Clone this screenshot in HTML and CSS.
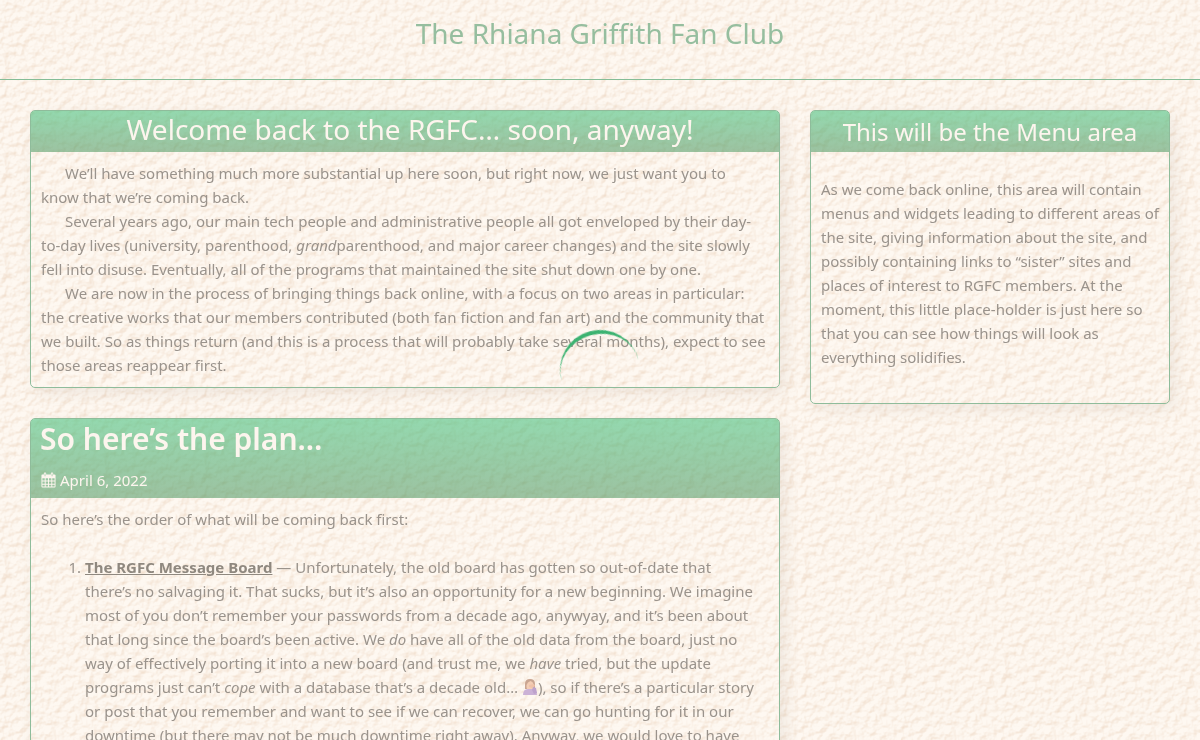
FILE: index.html
```html
<!DOCTYPE html>
<html lang="en">
<head>
    <meta charset="UTF-8">
    <meta name="viewport" content="width=device-width, initial-scale=1.0">
    <title>The Rhiana Griffith Fan Club</title>
    <link rel="stylesheet" href="styles.css">
</head>
<body class="loading">

    <!-- Stucco background -->
    <svg class="texture" aria-hidden="true">
        <filter id="stucco" x="0" y="0" width="100%" height="100%" color-interpolation-filters="sRGB">
            <feTurbulence type="fractalNoise" baseFrequency="0.13" numOctaves="3" seed="8" stitchTiles="stitch" x="0" y="0" width="100" height="100" result="noise"/>
            <feTile in="noise" result="tiled"/>
            <feDiffuseLighting in="tiled" surfaceScale="3" diffuseConstant="1.1" lighting-color="#fff" result="light">
                <feDistantLight azimuth="235" elevation="55"/>
            </feDiffuseLighting>
            <feColorMatrix type="matrix" values="0.06 0 0 0 0.935  0.12 0 0 0 0.852  0.17 0 0 0 0.775  0 0 0 0 1"/>
        </filter>
        <rect width="100%" height="100%" filter="url(#stucco)"/>
    </svg>

    <header>
        <h1>The Rhiana Griffith Fan Club</h1>
    </header>

    <div class="container">
        <main>
            <section class="card">
                <div class="card-header welcome-header">
                    <h2>Welcome back to the RGFC… soon, anyway!</h2>
                </div>
                <div class="card-body indented">
                    <p>We’ll have something much more substantial up here soon, but right now, we just want you to<br>
                    know that we’re coming back.</p>
                    <p>Several years ago, our main tech people and administrative people all got enveloped by their day-<br>
                    to-day lives (university, parenthood, <em>grand</em>parenthood, and major career changes) and the site slowly<br>
                    fell into disuse. Eventually, all of the programs that maintained the site shut down one by one.</p>
                    <p>We are now in the process of bringing things back online, with a focus on two areas in particular:<br>
                    the creative works that our members contributed (both fan fiction and fan art) and the community that<br>
                    we built. So as things return (and this is a process that will probably take several months), expect to see<br>
                    those areas reappear first.</p>
                </div>
            </section>

            <article class="card">
                <div class="card-header post-header">
                    <h2>So here’s the plan…</h2>
                    <p class="post-date">
                        <svg viewBox="0 0 16 16" aria-hidden="true">
                            <path fill="#fdf5ee" fill-rule="evenodd" d="M1.5 2H3V1Q3 0 4 0h.5q1 0 1 1v1h5V1q0-1 1-1h.5q1 0 1 1v1h1.500q1 0 1 1v12q0 1-1 1h-13q-1 0-1-1V3q0-1 1-1zM1.500 6v2.500H4V6zM5 6v2.500h2.500V6zM8.500 6v2.500H11V6zM12 6v2.500h2.500V6zM1.500 9.500V12H4V9.500zM5 9.500V12h2.500V9.500zM8.500 9.500V12H11V9.500zM12 9.500V12h2.500V9.500zM1.500 13v2H4v-2zM5 13v2h2.500v-2zM8.500 13v2H11v-2zM12 13v2h2.500v-2zM3.900 1v3h.8V1zM11.400 1v3h.8V1z"/>
                        </svg>
                        <time datetime="2022-04-06">April 6, 2022</time>
                    </p>
                </div>
                <div class="card-body">
                    <p>So here’s the order of what will be coming back first:</p>
                    <ol>
                        <li><a href="#board">The RGFC Message Board</a> — Unfortunately, the old board has gotten so out-of-date that<br>
                            there’s no salvaging it. That sucks, but it’s also an opportunity for a new beginning. We imagine<br>
                            most of you don’t remember your passwords from a decade ago, anywyay, and it’s been about<br>
                            that long since the board’s been active. We <em>do</em> have all of the old data from the board, just no<br>
                            way of effectively porting it into a new board (and trust me, we <em>have</em> tried, but the update<br>
                            programs just can’t <em>cope</em> with a database that’s a decade old…
                            <svg class="emoji" viewBox="0 0 16 16" role="img" aria-label="facepalm">
                                <path fill="#c9a591" d="M3 10V5q0-5 5-5t5 5v5z"/>
                                <path fill="#f3cdb4" d="M4.500 6q1-3 4-4 3 1 3 4v2q0 3-3.500 3T4.500 8z"/>
                                <path fill="#cbb2d6" d="M1 16q0-6 5-6h4q5 0 5 6z"/>
                                <path fill="#efc2a8" d="M7 6l5-1 1 2-3 2-3-1z"/>
                                <path fill="#bda2cc" d="M11 8l3 1 1 5-3 1-2-4z"/>
                            </svg>), so if there’s a particular story<br>
                            or post that you remember and want to see if we can recover, we can go hunting for it in our<br>
                            downtime (but there may not be much downtime right away). Anyway, we would love to have</li>
                    </ol>
                </div>
            </article>
        </main>

        <aside class="card">
            <div class="card-header menu-header">
                <h2>This will be the Menu area</h2>
            </div>
            <div class="card-body menu-body">
                <p>As we come back online, this area will contain menus and widgets leading to different areas of the site, giving information about the site, and possibly containing links to “sister” sites and places of interest to RGFC members. At the moment, this little place-holder is just here so that you can see how things will look as everything solidifies.</p>
            </div>
        </aside>
    </div>

    <div class="loader" role="status" aria-label="Loading"></div>

</body>
</html>
```
FILE: styles.css
```css
* {
    box-sizing: border-box;
}
body {
    font-family: "Noto Sans", "Open Sans", sans-serif;
    font-size: 15px;
    line-height: 24px;
    margin: 0;
    background-color: #fdf5ee;
    color: #9a938c;
}
body.loading {
    height: 100vh;
    overflow: hidden;
}
h1, h2, p {
    margin: 0;
    font-weight: normal;
}
.texture {
    position: fixed;
    top: 0;
    left: 0;
    width: 100%;
    height: 100%;
    z-index: -1;
}
header {
    height: 80px;
    padding-top: 13px;
    border-bottom: 1px solid #85bd96;
    text-align: center;
}
header h1 {
    font-size: 28px;
    line-height: 40px;
    color: #96be9f;
}
.container {
    display: grid;
    grid-template-columns: 25fr 12fr;
    gap: 30px;
    align-items: start;
    padding: 30px;
}
main {
    display: grid;
    gap: 30px;
}
.card {
    border: 1px solid #8fbc9b;
    border-radius: 5px;
    box-shadow: 5px 5px 15px rgba(120, 100, 80, 0.1);
    overflow: hidden;
}
.card-header {
    background: linear-gradient(rgba(60, 190, 120, 0.55), rgba(75, 150, 95, 0.55));
    color: #fdf5ee;
    text-align: center;
}
.card-header h2 {
    font-size: 28px;
    line-height: 40px;
}
.welcome-header {
    padding: 0 0 5px 10px;
}
.welcome-header h2 {
    line-height: 36px;
}
.post-header {
    padding: 0 9px 1px;
    text-align: left;
}
.post-header h2 {
    font-size: 30px;
    font-weight: 600;
}
.post-date {
    display: flex;
    align-items: center;
    gap: 4px;
    height: 34px;
    margin-top: 4px;
    padding-left: 1px;
}
.post-date svg {
    width: 15px;
    height: 16px;
}
.menu-header {
    padding-top: 1px;
}
.menu-header h2 {
    font-size: 24px;
}
.card-body {
    padding: 9px 10px 10px;
}
.indented p {
    text-indent: 24px;
}
.menu-body {
    padding: 25px 10px 34px;
}
ol {
    margin: 24px 0;
    padding-left: 44px;
}
li a {
    color: #8f887f;
    font-weight: bold;
}
.emoji {
    width: 16px;
    height: 16px;
    vertical-align: -2px;
}
.loader {
    position: fixed;
    top: calc(50% - 40px);
    left: calc(50% - 40px);
    width: 80px;
    height: 80px;
    border-top: 4px solid #3cb371;
    border-radius: 50%;
    transform: rotate(-15deg);
}
```
